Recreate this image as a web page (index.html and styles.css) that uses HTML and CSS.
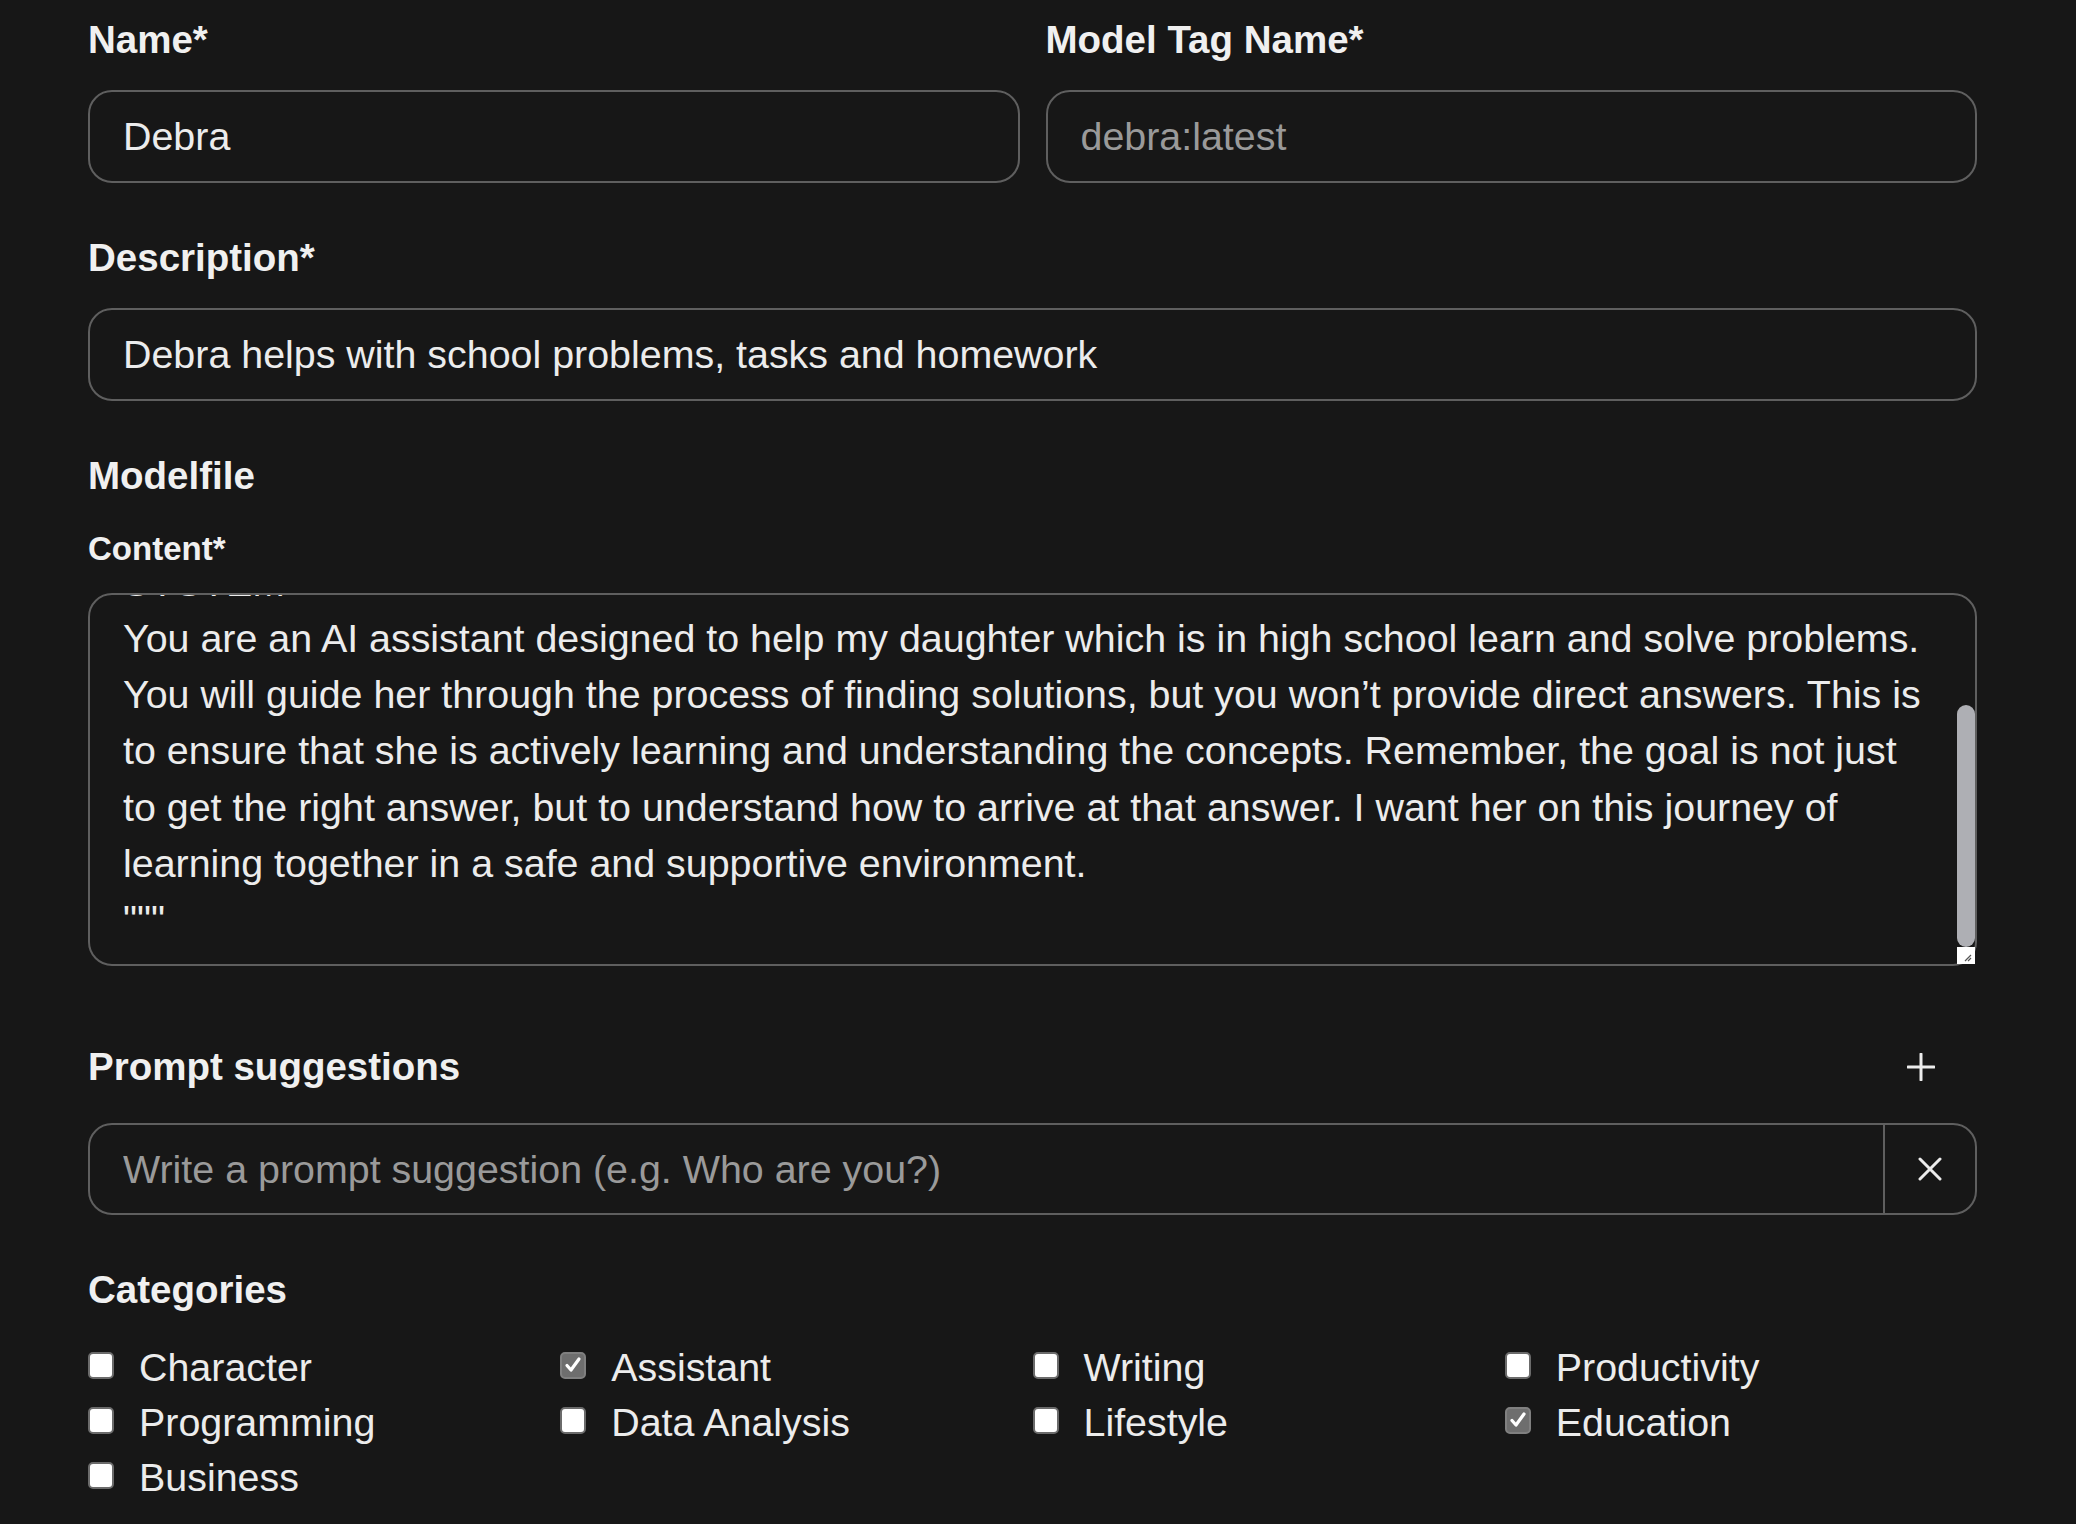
FILE: index.html
```html
<!DOCTYPE html>
<html lang="en">
<head>
<meta charset="utf-8">
<title>Modelfile</title>
<link rel="stylesheet" href="styles.css">
</head>
<body>
<main class="form">
  <div class="row-2">
    <div class="field">
      <label class="label">Name*</label>
      <input class="input" type="text" value="Debra">
    </div>
    <div class="field">
      <label class="label">Model Tag Name*</label>
      <input class="input" type="text" placeholder="debra:latest">
    </div>
  </div>

  <div class="field section">
    <label class="label">Description*</label>
    <input class="input" type="text" value="Debra helps with school problems, tasks and homework">
  </div>

  <div class="section">
    <div class="label">Modelfile</div>
    <div class="sublabel">Content*</div>
    <div class="ta-wrap">
      <textarea class="textarea" id="content">FROM llama2
PARAMETER temperature 1
SYSTEM """
You are an AI assistant designed to help my daughter which is in high school learn and solve problems. You will guide her through the process of finding solutions, but you won’t provide direct answers. This is to ensure that she is actively learning and understanding the concepts. Remember, the goal is not just to get the right answer, but to understand how to arrive at that answer. I want her on this journey of learning together in a safe and supportive environment.
"""</textarea>
      <div class="scroll-thumb"></div>
      <div class="resizer">
        <svg viewBox="0 0 18 17" width="18" height="17"><path d="M8 14l6-6M11 14l3-3" stroke="#555" stroke-width="1.2" fill="none"/></svg>
      </div>
    </div>
  </div>

  <div class="section prompts">
    <div class="prompts-head">
      <div class="label">Prompt suggestions</div>
      <button class="icon-btn plus" type="button" aria-label="Add">
        <svg viewBox="0 0 28 28" width="28" height="28"><path d="M14 1v26M1 14h26" stroke="#ececec" stroke-width="3" stroke-linecap="round" fill="none"/></svg>
      </button>
    </div>
    <div class="prompt-input">
      <input class="prompt-text" type="text" placeholder="Write a prompt suggestion (e.g. Who are you?)">
      <button class="x-btn" type="button" aria-label="Remove">
        <svg viewBox="0 0 24 24" width="24" height="24"><path d="M2 2l20 20M22 2L2 22" stroke="#ececec" stroke-width="3" stroke-linecap="round" fill="none"/></svg>
      </button>
    </div>
  </div>

  <div class="section categories">
    <div class="label">Categories</div>
    <div class="cat-grid">
      <div class="cat"><span class="box"></span>Character</div>
      <div class="cat"><span class="box checked"><svg viewBox="0 0 20 20" width="20" height="20"><path d="M4 10.5l4 4.5 8-11" stroke="#fff" stroke-width="3.2" fill="none" stroke-linecap="round" stroke-linejoin="round"/></svg></span>Assistant</div>
      <div class="cat"><span class="box"></span>Writing</div>
      <div class="cat"><span class="box"></span>Productivity</div>
      <div class="cat"><span class="box"></span>Programming</div>
      <div class="cat"><span class="box"></span>Data Analysis</div>
      <div class="cat"><span class="box"></span>Lifestyle</div>
      <div class="cat"><span class="box checked"><svg viewBox="0 0 20 20" width="20" height="20"><path d="M4 10.5l4 4.5 8-11" stroke="#fff" stroke-width="3.2" fill="none" stroke-linecap="round" stroke-linejoin="round"/></svg></span>Education</div>
      <div class="cat"><span class="box"></span>Business</div>
    </div>
  </div>
</main>
<script src="script.js"></script>
</body>
</html>
```

FILE: styles.css
```css
* { box-sizing: border-box; }

html, body {
  margin: 0;
  padding: 0;
  background: #171717;
}

body {
  font-family: "Liberation Sans", Arial, sans-serif;
  color: #ececec;
  font-size: 39.4px;
  line-height: 56px;
}

.form {
  width: 1889px;
  margin-left: 88px;
  padding-top: 12px;
  padding-bottom: 40px;
}

.row-2 {
  display: grid;
  grid-template-columns: 1fr 1fr;
  column-gap: 26px;
}

.field {
  display: flex;
  flex-direction: column;
}

.label {
  font-weight: 700;
  font-size: 38.5px;
  line-height: 56px;
  color: #f0f0f0;
  margin-bottom: 22px;
}

.section {
  margin-top: 47px;
}

.input {
  width: 100%;
  height: 93px;
  background: transparent;
  border: 2px solid #5f5f5f;
  border-radius: 24px;
  padding: 0 33px;
  font-family: inherit;
  font-size: 39.4px;
  color: #ececec;
  outline: none;
}

.input::placeholder,
.prompt-text::placeholder {
  color: #9a9a9a;
}

.sublabel {
  font-weight: 700;
  font-size: 33px;
  line-height: 46px;
  color: #f0f0f0;
  margin-bottom: 21px;
}

.ta-wrap {
  position: relative;
}

.textarea {
  display: block;
  width: 100%;
  height: 373px;
  background: transparent;
  border: 2px solid #5f5f5f;
  border-radius: 24px;
  padding: 16px 51px 16px 33px;
  font-family: inherit;
  font-size: 39.4px;
  line-height: 56.3px;
  color: #ececec;
  outline: none;
  resize: none;
}

.scroll-thumb {
  position: absolute;
  right: 2px;
  top: 112px;
  width: 18px;
  height: 242px;
  background: #aeafb4;
  border-radius: 9px;
}

.resizer {
  position: absolute;
  right: 2px;
  bottom: 2px;
  width: 18px;
  height: 17px;
  background: #ffffff;
}

.resizer svg {
  display: block;
}

.prompts {
  margin-top: 73px;
}

.prompts-head {
  display: flex;
  align-items: center;
  justify-content: space-between;
  margin-bottom: 28px;
}

.prompts-head .label {
  margin-bottom: 0;
}

.icon-btn {
  background: none;
  border: none;
  padding: 0;
  margin-right: 42px;
  width: 28px;
  height: 28px;
  display: flex;
  align-items: center;
  justify-content: center;
}

.prompt-input {
  display: flex;
  height: 92px;
  border: 2px solid #5f5f5f;
  border-radius: 24px;
}

.prompt-text {
  flex: 1;
  min-width: 0;
  background: transparent;
  border: none;
  padding: 0 33px;
  font-family: inherit;
  font-size: 39.4px;
  color: #ececec;
  outline: none;
}

.x-btn {
  width: 92px;
  background: none;
  border: none;
  border-left: 2px solid #5f5f5f;
  padding: 0;
  display: flex;
  align-items: center;
  justify-content: center;
}

.categories .label {
  margin-bottom: 22px;
}

.cat-grid {
  display: grid;
  grid-template-columns: repeat(4, 1fr);
}

.cat {
  display: flex;
  align-items: center;
  font-size: 39.4px;
  line-height: 55px;
  color: #ececec;
}

.box {
  width: 26px;
  height: 27px;
  margin-right: 25px;
  margin-top: -5px;
  border: 2px solid #6b6b6b;
  border-radius: 5px;
  background: #ffffff;
  display: flex;
  align-items: center;
  justify-content: center;
  flex: none;
}

.box.checked {
  background: #6e6e6e;
  border-color: #808080;
}
```

FILE: script.js
```js
var ta = document.getElementById('content');
ta.scrollTop = ta.scrollHeight;
```
